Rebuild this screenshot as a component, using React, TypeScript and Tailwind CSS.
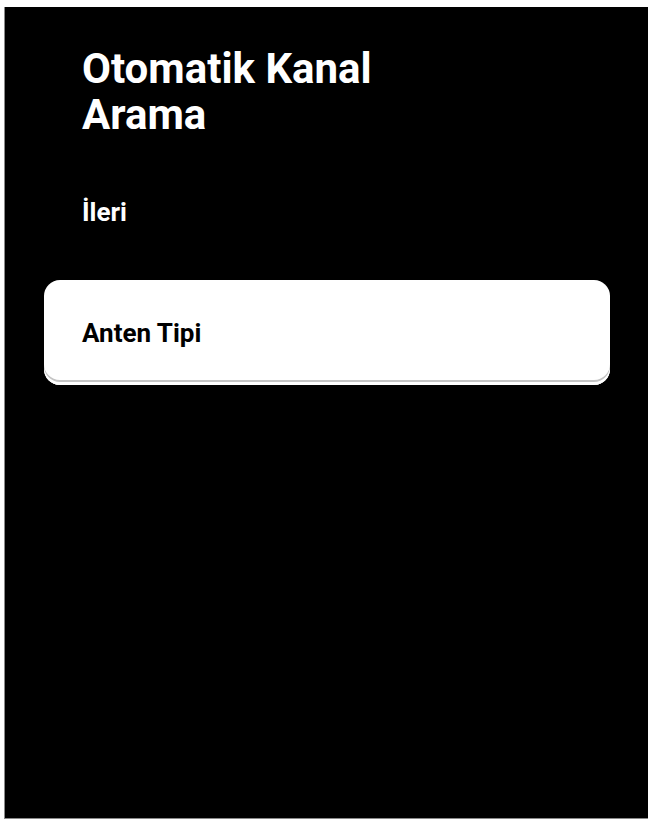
import React from 'react';

const App: React.FC = () => {
  return (
    <div className="w-[648px] h-[821px] bg-white pt-[7px] pl-[4px] overflow-hidden" style={{ fontFamily: 'Roboto, "Liberation Sans", sans-serif' }}>
      {/* Panel */}
      <div className="h-[812px] bg-black border-l border-b border-[#8a8a8a] flex flex-col">
        <h1 className="pl-[77px] pt-[39px] text-white font-bold text-[42px] leading-[46px]">
          Otomatik Kanal
          <br />
          Arama
        </h1>

        <p className="pl-[77px] mt-[59px] text-white font-bold text-[26px] leading-[30px]">İleri</p>

        {/* Menu item */}
        <div className="ml-[39px] mr-[38px] mt-[53px] h-[105px] bg-white rounded-[16px] flex items-center pl-[38px] shadow-[inset_0_-3px_0_#ffffff,inset_0_-5px_0_#c4c4c4]">
          <span className="text-black font-bold text-[26px] leading-[30px]">Anten Tipi</span>
        </div>
      </div>
    </div>
  );
};

export default App;
